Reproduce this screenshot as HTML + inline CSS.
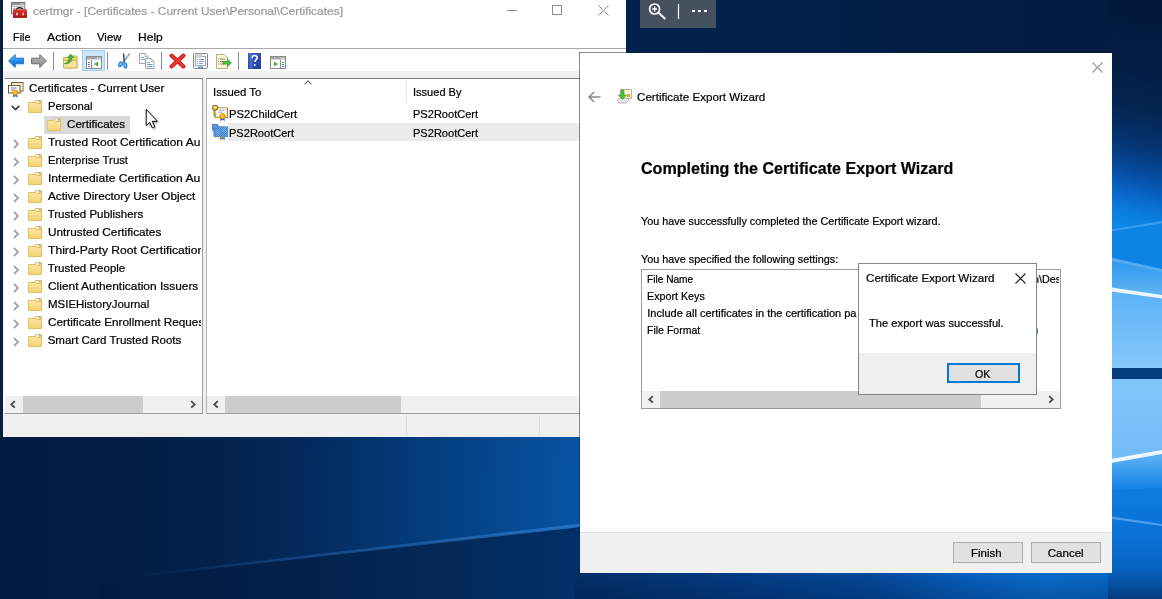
<!DOCTYPE html>
<html><head><meta charset="utf-8"><title>certmgr</title>
<style>
*{box-sizing:border-box;margin:0;padding:0}
html,body{width:1162px;height:599px;overflow:hidden;background:#03204a;font-family:"Liberation Sans",sans-serif;font-size:12px;color:#000}
div,svg,span{position:absolute}
.t{height:20px;line-height:20px;white-space:pre;transform-origin:0 50%;display:block;-webkit-text-stroke:.22px currentColor}
#root{left:0;top:0;width:1162px;height:599px;overflow:hidden;filter:blur(.4px)}
#desk{left:0;top:0;width:1162px;height:599px}
#mmc{left:0;top:0;width:626px;height:437px;background:#fff;overflow:hidden}
#tree{left:4px;top:78px;width:199px;height:336px;background:#fff;border:1px solid #9d9d9d;border-top-color:#7a7a7a;border-left-color:#fff;overflow:hidden}
#list{left:206px;top:78px;width:430px;height:336px;background:#fff;border:1px solid #9d9d9d;border-top-color:#7a7a7a;border-left-color:#b4b4b4;overflow:hidden}
#wiz{left:579px;top:52px;width:533px;height:521px;overflow:hidden}
#msg{left:858px;top:263px;width:179px;height:132px;background:#fff;border:1px solid #858585;overflow:hidden}
.btn{height:21px;border:1px solid #adadad;background:#e1e1e1}
.sb{background:#f0f0f0}
.thumb{background:#cdcdcd}
</style></head><body>
<div id="root">
<svg width="0" height="0" style="position:absolute">
<defs>
<linearGradient id="gfold" x1="0" y1="0" x2="0" y2="1"><stop offset="0" stop-color="#fae7a4"/><stop offset="1" stop-color="#f3d272"/></linearGradient>
<symbol id="folder" viewBox="0 0 14 13">
 <path d="M7.5 0.5h5.5a0.5 0.5 0 0 1 .5 .5v3h-6z" fill="#f5dc8a" stroke="#e0bf62" stroke-width="1"/>
 <rect x="8.300" y="1" width="2.700" height="1.600" fill="#fffbe6"/><rect x="10.600" y="0.800" width="2.200" height="1.600" fill="#8fbcd4"/>
 <path d="M0.5 2.5h7l1 1h5v9h-13z" fill="url(#gfold)" stroke="#e3c062" stroke-width="1"/>
</symbol>
<symbol id="chevR" viewBox="0 0 6 10"><path d="M1 0.900L5 5L1 9.100" fill="none" stroke="#a3a3a3" stroke-width="1.900"/></symbol>
<symbol id="chevD" viewBox="0 0 9 6"><path d="M0.800 0.800L4.500 4.600L8.200 0.800" fill="none" stroke="#3c3c3c" stroke-width="1.700"/></symbol>
<symbol id="sbL" viewBox="0 0 6 9"><path d="M4.800 1.100L1.300 4.400L4.800 7.700" fill="none" stroke="#484848" stroke-width="1.800"/></symbol>
<symbol id="sbR" viewBox="0 0 6 9"><path d="M1.200 1.100L4.700 4.400L1.200 7.700" fill="none" stroke="#484848" stroke-width="1.800"/></symbol>
<symbol id="cert" viewBox="0 0 16 16">
 <rect x="3.100" y="2.900" width="12.400" height="9.800" fill="#fffdf8" stroke="#b08a55" stroke-width="1"/>
 <rect x="4.200" y="4" width="10.200" height="7.600" fill="none" stroke="#f0e2c0" stroke-width=".9"/>
 <path d="M6.500 5.300h6M6.500 7.200h3.500" stroke="#8fa6d8" stroke-width=".9"/>
 <path d="M8.600 12.800l-.5 3.200 2.400-1.300 2.400 1.300-.5-3.200z" fill="#2c5fc4"/>
 <circle cx="10.500" cy="11.100" r="2.700" fill="#f4b21e" stroke="#d08c10" stroke-width=".8"/>
 <circle cx="10" cy="10.500" r="1" fill="#f9cf5a"/>
 <path d="M2.300 4.500v7M2.300 9.300h1.400M2.300 11.200h1.400" stroke="#b8902a" stroke-width="1.500" fill="none"/>
 <ellipse cx="3.100" cy="2.700" rx="2.900" ry="2.400" fill="#efcb4c" stroke="#6e5410" stroke-width=".9"/>
 <ellipse cx="3.300" cy="2.200" rx="1.100" ry=".8" fill="#fff4b8"/>
</symbol>
<pattern id="dith" width="2" height="2" patternUnits="userSpaceOnUse"><rect width="2" height="2" fill="#4a94e6" fill-opacity=".72"/><rect width="1" height="1" fill="#2f80e0" fill-opacity=".8"/><rect x="1" y="1" width="1" height="1" fill="#2f80e0" fill-opacity=".8"/></pattern>
</defs></svg>
<svg id="desk" viewBox="0 0 1162 599" preserveAspectRatio="none">
<defs>
 <linearGradient id="dtop" x1="626" y1="0" x2="1162" y2="0" gradientUnits="userSpaceOnUse"><stop offset="0" stop-color="#02224d"/><stop offset="1" stop-color="#021a3d"/></linearGradient>
 <linearGradient id="dbl" x1="0" y1="0" x2="580" y2="0" gradientUnits="userSpaceOnUse"><stop offset="0" stop-color="#021b3e"/><stop offset=".3" stop-color="#021f47"/><stop offset=".55" stop-color="#032a5c"/><stop offset=".8" stop-color="#043a78"/><stop offset="1" stop-color="#054a94"/></linearGradient>
 <radialGradient id="dglow" cx="640" cy="500" r="360" gradientUnits="userSpaceOnUse"><stop offset="0" stop-color="#0a6ed0" stop-opacity=".34"/><stop offset=".35" stop-color="#0a68c8" stop-opacity=".24"/><stop offset="1" stop-color="#0a60c0" stop-opacity="0"/></radialGradient>
 <linearGradient id="dbl2" x1="0" y1="0" x2="580" y2="0" gradientUnits="userSpaceOnUse"><stop offset="0" stop-color="#021a3c"/><stop offset=".4" stop-color="#021e46"/><stop offset=".8" stop-color="#032a5a"/><stop offset="1" stop-color="#03306a"/></linearGradient>
 <linearGradient id="dray" x1="130" y1="0" x2="580" y2="0" gradientUnits="userSpaceOnUse"><stop offset="0" stop-color="#2a6cb8" stop-opacity="0"/><stop offset=".4" stop-color="#2a6cb8" stop-opacity=".45"/><stop offset="1" stop-color="#2a7cd0" stop-opacity=".8"/></linearGradient>
 <linearGradient id="dbot" x1="580" y1="0" x2="1162" y2="0" gradientUnits="userSpaceOnUse"><stop offset="0" stop-color="#03306a"/><stop offset=".25" stop-color="#043c84"/><stop offset=".5" stop-color="#04489c"/><stop offset=".66" stop-color="#0660c0"/><stop offset=".8" stop-color="#0a6ed2"/><stop offset=".92" stop-color="#0868c8"/><stop offset="1" stop-color="#054c9c"/></linearGradient>
 <linearGradient id="dbotv" x1="0" y1="573" x2="0" y2="599" gradientUnits="userSpaceOnUse"><stop offset="0" stop-color="#000" stop-opacity="0"/><stop offset="1" stop-color="#001030" stop-opacity=".25"/></linearGradient>
 <linearGradient id="dr1" x1="1150" y1="0" x2="1096" y2="236" gradientUnits="userSpaceOnUse">
  <stop offset="0" stop-color="#021838"/><stop offset=".28" stop-color="#031d44"/><stop offset=".45" stop-color="#032652"/><stop offset=".58" stop-color="#04326e"/><stop offset=".7" stop-color="#064a9c"/><stop offset=".78" stop-color="#0860c0"/><stop offset=".87" stop-color="#0b7cde"/><stop offset=".94" stop-color="#0c88e8"/><stop offset="1" stop-color="#0c86e6"/></linearGradient>
 <linearGradient id="dr2" x1="0" y1="290" x2="0" y2="370" gradientUnits="userSpaceOnUse"><stop offset="0" stop-color="#5ab2f6"/><stop offset="1" stop-color="#86c8fa"/></linearGradient>
 <linearGradient id="dr3" x1="0" y1="378" x2="0" y2="460" gradientUnits="userSpaceOnUse"><stop offset="0" stop-color="#82c6fa"/><stop offset="1" stop-color="#72bcf7"/></linearGradient>
 <linearGradient id="dr4" x1="0" y1="480" x2="0" y2="599" gradientUnits="userSpaceOnUse"><stop offset="0" stop-color="#0c7ee2"/><stop offset=".5" stop-color="#0a70d4"/><stop offset=".75" stop-color="#0862c0"/><stop offset=".9" stop-color="#054c9c"/><stop offset="1" stop-color="#033a7c"/></linearGradient>
 <linearGradient id="dr5" x1="0" y1="258" x2="0" y2="292" gradientUnits="userSpaceOnUse"><stop offset="0" stop-color="#2a96ec"/><stop offset="1" stop-color="#5cb2f4"/></linearGradient>
 <linearGradient id="dr6" x1="0" y1="458" x2="0" y2="492" gradientUnits="userSpaceOnUse"><stop offset="0" stop-color="#56aef4"/><stop offset="1" stop-color="#0c7ee2"/></linearGradient>
 <clipPath id="cr"><rect x="1108" y="0" width="54" height="599"/></clipPath>
</defs>
<rect width="1162" height="599" fill="#021d45"/>
<rect x="600" y="0" width="562" height="60" fill="url(#dtop)"/>
<rect x="0" y="430" width="590" height="169" fill="url(#dbl)"/>
<rect x="0" y="430" width="590" height="169" fill="url(#dglow)"/>
<path d="M100 580L590 524.500V599H100z" fill="url(#dbl2)"/>
<path d="M130 576L590 522.500V526L130 578z" fill="url(#dray)"/>
<rect x="575" y="565" width="587" height="34" fill="url(#dbot)"/>
<rect x="575" y="565" width="587" height="34" fill="url(#dbotv)"/>
<g clip-path="url(#cr)">
 <rect x="1108" y="0" width="54" height="240" fill="url(#dr1)"/>
 <path d="M1108 230L1162 221V223.500L1108 232z" fill="#3a9cee"/>
 <path d="M1108 232L1162 223.500V280H1108z" fill="#0c84e6"/>
 <path d="M1108 257L1162 271V300H1108z" fill="url(#dr5)"/>
 <path d="M1108 257L1162 269V272L1108 260z" fill="#56acf0"/>
 <path d="M1108 287L1162 295V372H1108z" fill="url(#dr2)"/>
 <path d="M1108 287L1162 295V298.500L1108 291z" fill="#eaf5fe"/>
 <rect x="1108" y="368" width="54" height="11" fill="#053c7c"/>
 <rect x="1108" y="379" width="54" height="110" fill="url(#dr3)"/>
 <path d="M1108 463L1162 452V494H1108z" fill="url(#dr6)"/>
 <path d="M1108 459.500L1162 450V454L1108 463.500z" fill="#f0f8ff"/>
 <path d="M1108 490L1162 488V599H1108z" fill="url(#dr4)"/>
 <path d="M1108 516L1162 524V526L1108 518.500z" fill="#4aa2ee"/>
</g>
</svg>
<div id="mmc"><svg style="left:11px;top:2px" width="17" height="17" viewBox="0 0 17 17">
<rect x="0.500" y="0.500" width="13.300" height="11.200" fill="#fff" stroke="#6f7378"/>
<rect x="1" y="1" width="12.300" height="1.900" fill="#8f9399"/>
<rect x="9.400" y="1.400" width="1" height="1" fill="#fff"/><rect x="11.300" y="1.400" width="1" height="1" fill="#fff"/>
<path d="M1 4.200h12.300" stroke="#8f9399" stroke-width=".9"/>
<path d="M1.500 6.300h11.500M3.300 6.300v5" stroke="#a9adb3" stroke-width=".8"/>
<path d="M5.600 7.800c.3-2.900 5.800-2.900 6.100 0" fill="none" stroke="#1a1a1a" stroke-width="1.300"/>
<rect x="2" y="7.500" width="14" height="8.300" rx=".8" fill="#cf2424"/>
<rect x="2" y="7.500" width="14" height="1" rx=".5" fill="#e25252"/>
<rect x="2" y="13.600" width="14" height="2.200" rx=".6" fill="#a81818"/>
<rect x="5.200" y="10.700" width="1.500" height="2.700" fill="#f3dede"/><rect x="11.400" y="10.700" width="1.500" height="2.700" fill="#f3dede"/>
</svg><span class="t" style="left:32.70px;top:1.3000000000000007px;font-size:11.5px;font-weight:normal;color:#999999;transform:scaleX(1.0387);">certmgr - [Certificates - Current User\Personal\Certificates]</span><div style="left:507px;top:10px;width:10px;height:1px;background:#8c8c8c"></div><div style="left:552px;top:5px;width:10px;height:10px;border:1px solid #8c8c8c"></div><svg style="left:598px;top:5px" width="11" height="11" viewBox="0 0 11 11"><path d="M0.500 0.500L10.500 10.500M10.500 0.500L0.500 10.500" stroke="#8c8c8c" stroke-width="1"/></svg><span class="t" style="left:12.60px;top:26.700000000000003px;font-size:11.5px;font-weight:normal;color:#000;transform:scaleX(0.9497);">File</span><span class="t" style="left:46.60px;top:26.700000000000003px;font-size:11.5px;font-weight:normal;color:#000;transform:scaleX(1.0667);">Action</span><span class="t" style="left:97.40px;top:26.700000000000003px;font-size:11.5px;font-weight:normal;color:#000;transform:scaleX(0.9871);">View</span><span class="t" style="left:137.90px;top:26.700000000000003px;font-size:11.5px;font-weight:normal;color:#000;transform:scaleX(1.0483);">Help</span><div style="left:0;top:48px;width:626px;height:1px;background:#a8a8a8"></div><svg style="left:8px;top:54px" width="16" height="14" viewBox="0 0 16 14">
<defs><linearGradient id="gb" x1="0" y1="0" x2="0" y2="1"><stop offset="0" stop-color="#6fc0f6"/><stop offset=".5" stop-color="#1f8fe6"/><stop offset="1" stop-color="#1566c4"/></linearGradient></defs>
<path d="M0.600 7L7.200 0.600V4.200H15.400V9.800H7.200V13.400z" fill="url(#gb)" stroke="#1b6fc8" stroke-width="1"/></svg><svg style="left:31px;top:54px" width="16" height="14" viewBox="0 0 16 14">
<defs><linearGradient id="gg" x1="0" y1="0" x2="0" y2="1"><stop offset="0" stop-color="#b8b8b8"/><stop offset="1" stop-color="#8c8c8c"/></linearGradient></defs>
<path d="M15.400 7L8.800 0.600V4.200H0.600V9.800H8.800V13.400z" fill="url(#gg)" stroke="#6e6e6e" stroke-width="1"/></svg><div style="left:53px;top:52px;width:1px;height:18px;background:#8d8d8d"></div><div style="left:107px;top:52px;width:1px;height:18px;background:#8d8d8d"></div><div style="left:161px;top:52px;width:1px;height:18px;background:#8d8d8d"></div><div style="left:238px;top:52px;width:1px;height:18px;background:#8d8d8d"></div><svg style="left:63px;top:53px" width="15" height="16" viewBox="0 0 15 16">
<path d="M0.500 4.500h5l1-1.500h7.500v12h-13.500z" fill="#f1d27a" stroke="#d2b25a"/>
<path d="M0.500 7.500h13.500v7.500h-13.500z" fill="#f7e3a0" stroke="#d2b25a"/>
<path d="M4 11.500c3.500-.5 5.500-3 5.500-6.500h-2l3.500-4 3.500 4h-2c0 4.500-3.500 8-8.500 6.500z" fill="#3fb536" stroke="#2b8f26" stroke-width=".6" transform="translate(-2.500,0) scale(.92)"/>
</svg><div style="left:82px;top:50px;width:23px;height:21px;background:#cce4f7;border:1px solid #a5cdee"></div><svg style="left:86px;top:56px" width="16" height="13" viewBox="0 0 16 13">
<rect x="0.500" y="0.500" width="15" height="12" fill="#fff" stroke="#8a8a8a"/>
<rect x="1" y="1" width="14" height="2.500" fill="#a8a8a8"/>
<rect x="11" y="1.500" width="1.200" height="1.200" fill="#fff"/><rect x="13" y="1.500" width="1.200" height="1.200" fill="#fff"/>
<path d="M5.500 4v8.500" stroke="#8a8a8a"/>
<path d="M2 6.500h2M2 8.500h2M2 10.500h2" stroke="#5a7fc0" stroke-width="1"/>
<path d="M12 5.500v5L8 8z" fill="#3fb536"/>
</svg><svg style="left:118px;top:53px" width="13" height="16" viewBox="0 0 13 16">
<path d="M11.600 0.800L4.200 10.800" stroke="#8e9cae" stroke-width="1.600" fill="none"/>
<path d="M5.600 0.500L6.300 9.500" stroke="#4f6078" stroke-width="1.700" fill="none"/>
<ellipse cx="2.500" cy="11.300" rx="1.600" ry="2.300" fill="#8ccaf6" stroke="#2a86de" stroke-width="1.400" transform="rotate(30 2.500 11.300)"/>
<ellipse cx="7.300" cy="12.500" rx="1.400" ry="2.600" fill="#8ccaf6" stroke="#2a86de" stroke-width="1.400" transform="rotate(-8 7.300 12.500)"/>
</svg><svg style="left:139px;top:53px" width="16" height="16" viewBox="0 0 16 16">
<path d="M0.500 0.500h5.500l3 3v7h-8.500z" fill="#fff" stroke="#a3a7ad"/>
<path d="M6 0.500v3h3" fill="none" stroke="#a3a7ad" stroke-width=".8"/>
<path d="M2 4.500h3M2 6.500h5" stroke="#7fa8e6" stroke-width="1"/>
<path d="M6.500 5.500h5.500l3 3v7h-8.500z" fill="#fff" stroke="#a3a7ad"/>
<path d="M12 5.500v3h3" fill="none" stroke="#a3a7ad" stroke-width=".8"/>
<path d="M8 9.500h3M8 11.500h5.500M8 13.500h5.500" stroke="#6f9be0" stroke-width="1"/>
</svg><svg style="left:169px;top:53px" width="17" height="16" viewBox="0 0 17 16">
<path d="M2.500 2.500L14.500 13.500M14.500 2.500L2.500 13.500" stroke="#d41414" stroke-width="4" stroke-linecap="round"/>
<path d="M2.500 2.500L14.500 13.500M14.500 2.500L2.500 13.500" stroke="#e93a3a" stroke-width="2" stroke-linecap="round"/>
</svg><svg style="left:193px;top:53px" width="15" height="16" viewBox="0 0 15 16">
<rect x="0.500" y="0.500" width="14" height="15" rx="1" fill="#f4f4f4" stroke="#8a8a8a"/>
<rect x="2.500" y="3.500" width="10" height="9" fill="#fff" stroke="#a8a8a8"/>
<rect x="2.500" y="2" width="6" height="2" fill="#e0e0e0" stroke="#a8a8a8" stroke-width=".6"/>
<path d="M4 6.500h1M6 6.500h5M4 8.500h1M6 8.500h5M4 10.500h1M6 10.500h4" stroke="#7aa0d8" stroke-width="1"/>
<rect x="5" y="13.500" width="5" height="1.500" fill="#4aa0e0"/>
</svg><svg style="left:215px;top:54px" width="17" height="15" viewBox="0 0 17 15">
<path d="M1.500 0.500h8l3 3v11h-11z" fill="#fdf7d8" stroke="#b8b08a"/>
<path d="M3 5h1M5 5h5M3 7.500h1M5 7.500h4M3 10h1M5 10h4" stroke="#8a8a7a" stroke-width="1"/>
<path d="M8 7.500h4.500v-2.300l4 3.600-4 3.600v-2.300h-4.500z" fill="#4cc23c" stroke="#2e9a28" stroke-width=".7"/>
</svg><svg style="left:248px;top:53px" width="13" height="16" viewBox="0 0 13 16">
<defs><linearGradient id="gh" x1="0" y1="0" x2="1" y2="1"><stop offset="0" stop-color="#3a66cc"/><stop offset="1" stop-color="#23399a"/></linearGradient></defs>
<rect width="13" height="16" fill="url(#gh)"/>
<path d="M4 5.200c0-2 1.200-2.800 2.600-2.800s2.600 .9 2.600 2.400c0 1.800-2.300 2-2.300 4.200" fill="none" stroke="#fff" stroke-width="1.500"/>
<rect x="5.900" y="11.200" width="1.700" height="1.700" fill="#fff"/>
<rect x="2" y="0" width="2.200" height="16" fill="#6f8fe0" opacity=".45"/>
</svg><svg style="left:270px;top:56px" width="16" height="13" viewBox="0 0 16 13">
<rect x="0.500" y="0.500" width="15" height="12" fill="#fff" stroke="#8a8a8a"/>
<rect x="1" y="1" width="14" height="2.500" fill="#a8a8a8"/>
<rect x="11" y="1.500" width="1.200" height="1.200" fill="#fff"/><rect x="13" y="1.500" width="1.200" height="1.200" fill="#fff"/>
<path d="M10.500 4v8.500" stroke="#8a8a8a"/>
<path d="M12 6.500h2M12 8.500h2M12 10.500h2" stroke="#5a7fc0" stroke-width="1"/>
<path d="M4 5.500v5L8 8z" fill="#3fb536"/>
</svg><div style="left:0;top:71px;width:626px;height:366px;background:#f0f0f0"></div><div id="tree"><svg style="left:3px;top:2.799999999999997px" width="16" height="16" viewBox="0 0 16 16">
 <rect x="3.500" y="0.500" width="11.500" height="8.500" fill="#fdf3d8" stroke="#6b5a3a"/>
 <rect x="4.500" y="1.500" width="9.500" height="6.500" fill="none" stroke="#f3e4b8" stroke-width=".8"/>
 <rect x="0.500" y="3.500" width="11.500" height="7.500" fill="#fffaf0" stroke="#6b5a3a"/>
 <path d="M3 6h5.500M3 8h2.500" stroke="#5f7fd0" stroke-width="1"/>
 <path d="M12.500 9.500l.3 2.500 1.200-.8z" fill="#c9962a"/>
 <path d="M5.600 11.500l-.6 4 2.300-1.300 2.300 1.300-.6-4z" fill="#2c5fc4"/>
 <circle cx="7.300" cy="10.600" r="2.600" fill="#f0ae1c" stroke="#c98a12" stroke-width=".8"/>
 <circle cx="6.900" cy="10.100" r=".9" fill="#f8d060"/>
</svg><span class="t" style="left:23.90px;top:-0.7000000000000028px;font-size:11.5px;font-weight:normal;color:#000;transform:scaleX(1.0145);">Certificates - Current User</span><svg style="left:6.199999999999999px;top:25.75999999999999px" width="9" height="6"><use href="#chevD"/></svg><svg style="left:23.2px;top:21.05999999999999px" width="14" height="13"><use href="#folder"/></svg><span class="t" style="left:42.70px;top:17.25px;font-size:11.5px;font-weight:normal;color:#000;transform:scaleX(0.9804);">Personal</span><div style="left:39px;top:37.12px;width:86px;height:17.5px;background:#d9d9d9"></div><svg style="left:42.2px;top:39.019999999999996px" width="14" height="13"><use href="#folder"/></svg><span class="t" style="left:61.90px;top:35.19999999999999px;font-size:11.5px;font-weight:normal;color:#000;transform:scaleX(1.0099);">Certificates</span><svg style="left:7.800000000000001px;top:59.980000000000004px" width="6" height="10"><use href="#chevR"/></svg><svg style="left:23.2px;top:56.980000000000004px" width="14" height="13"><use href="#folder"/></svg><span class="t" style="left:42.70px;top:53.14999999999998px;font-size:11.5px;font-weight:normal;color:#000;transform:scaleX(1.0389);">Trusted Root Certification Au</span><svg style="left:7.800000000000001px;top:77.93999999999998px" width="6" height="10"><use href="#chevR"/></svg><svg style="left:23.2px;top:74.93999999999998px" width="14" height="13"><use href="#folder"/></svg><span class="t" style="left:42.70px;top:71.1px;font-size:11.5px;font-weight:normal;color:#000;transform:scaleX(0.9856);">Enterprise Trust</span><svg style="left:7.800000000000001px;top:95.90000000000002px" width="6" height="10"><use href="#chevR"/></svg><svg style="left:23.2px;top:92.90000000000002px" width="14" height="13"><use href="#folder"/></svg><span class="t" style="left:42.70px;top:89.05000000000001px;font-size:11.5px;font-weight:normal;color:#000;transform:scaleX(1.0542);">Intermediate Certification Au</span><svg style="left:7.800000000000001px;top:113.86px" width="6" height="10"><use href="#chevR"/></svg><svg style="left:23.2px;top:110.86px" width="14" height="13"><use href="#folder"/></svg><span class="t" style="left:42.70px;top:107.0px;font-size:11.5px;font-weight:normal;color:#000;transform:scaleX(1.0191);">Active Directory User Object</span><svg style="left:7.800000000000001px;top:131.82px" width="6" height="10"><use href="#chevR"/></svg><svg style="left:23.2px;top:128.82px" width="14" height="13"><use href="#folder"/></svg><span class="t" style="left:42.70px;top:124.94999999999999px;font-size:11.5px;font-weight:normal;color:#000;">Trusted Publishers</span><svg style="left:7.800000000000001px;top:149.78000000000003px" width="6" height="10"><use href="#chevR"/></svg><svg style="left:23.2px;top:146.78000000000003px" width="14" height="13"><use href="#folder"/></svg><span class="t" style="left:42.70px;top:142.89999999999998px;font-size:11.5px;font-weight:normal;color:#000;transform:scaleX(1.0246);">Untrusted Certificates</span><svg style="left:7.800000000000001px;top:167.74px" width="6" height="10"><use href="#chevR"/></svg><svg style="left:23.2px;top:164.74px" width="14" height="13"><use href="#folder"/></svg><span class="t" style="left:42.70px;top:160.84999999999997px;font-size:11.5px;font-weight:normal;color:#000;transform:scaleX(1.0541);">Third-Party Root Certification</span><svg style="left:7.800000000000001px;top:185.70000000000005px" width="6" height="10"><use href="#chevR"/></svg><svg style="left:23.2px;top:182.70000000000005px" width="14" height="13"><use href="#folder"/></svg><span class="t" style="left:42.70px;top:178.8px;font-size:11.5px;font-weight:normal;color:#000;">Trusted People</span><svg style="left:7.800000000000001px;top:203.66000000000003px" width="6" height="10"><use href="#chevR"/></svg><svg style="left:23.2px;top:200.66000000000003px" width="14" height="13"><use href="#folder"/></svg><span class="t" style="left:42.70px;top:196.75px;font-size:11.5px;font-weight:normal;color:#000;transform:scaleX(1.0358);">Client Authentication Issuers</span><svg style="left:7.800000000000001px;top:221.62px" width="6" height="10"><use href="#chevR"/></svg><svg style="left:23.2px;top:218.62px" width="14" height="13"><use href="#folder"/></svg><span class="t" style="left:42.70px;top:214.7px;font-size:11.5px;font-weight:normal;color:#000;transform:scaleX(0.9968);">MSIEHistoryJournal</span><svg style="left:7.800000000000001px;top:239.58000000000004px" width="6" height="10"><use href="#chevR"/></svg><svg style="left:23.2px;top:236.58000000000004px" width="14" height="13"><use href="#folder"/></svg><span class="t" style="left:42.70px;top:232.64999999999998px;font-size:11.5px;font-weight:normal;color:#000;transform:scaleX(1.0231);">Certificate Enrollment Reques</span><svg style="left:7.800000000000001px;top:257.54px" width="6" height="10"><use href="#chevR"/></svg><svg style="left:23.2px;top:254.54000000000002px" width="14" height="13"><use href="#folder"/></svg><span class="t" style="left:42.70px;top:250.59999999999997px;font-size:11.5px;font-weight:normal;color:#000;">Smart Card Trusted Roots</span><div style="left:195.8px;top:0;width:2px;height:317px;background:#fff"></div><div class="sb" style="left:0;top:317px;width:197px;height:17px"></div><div class="thumb" style="left:17.5px;top:317px;width:120.5px;height:17px"></div><svg style="left:4.6px;top:321px" width="6" height="9"><use href="#sbL"/></svg><svg style="left:184.6px;top:321px" width="6" height="9"><use href="#sbR"/></svg></div><div id="list"><span class="t" style="left:5.80px;top:2.799999999999997px;font-size:11.5px;font-weight:normal;color:#000;transform:scaleX(0.9834);">Issued To</span><span class="t" style="left:205.60px;top:2.799999999999997px;font-size:11.5px;font-weight:normal;color:#000;transform:scaleX(0.9604);">Issued By</span><div style="left:199px;top:1px;width:1px;height:23px;background:#e5e5e5"></div><svg style="left:97.19999999999999px;top:1px" width="8" height="5" viewBox="0 0 8 5"><path d="M0.600 4.400L4 0.900L7.400 4.400" fill="none" stroke="#707070" stroke-width="1.200"/></svg><div style="left:20.5px;top:44.3px;width:420px;height:18px;background:#ebebeb"></div><svg style="left:4.699999999999989px;top:25.700000000000003px" width="16" height="16"><use href="#cert"/></svg><svg style="left:4.699999999999989px;top:44.7px" width="16" height="16"><use href="#cert"/></svg><svg style="left:4.699999999999989px;top:44.7px" width="16" height="16" viewBox="0 0 16 16"><path d="M0 0h6.500v2.500h9.500v10.500h-14.500v-6h-1.500z" fill="url(#dith)"/></svg><span class="t" style="left:22.20px;top:25px;font-size:11.5px;font-weight:normal;color:#000;transform:scaleX(0.9789);">PS2ChildCert</span><span class="t" style="left:22.20px;top:44.400000000000006px;font-size:11.5px;font-weight:normal;color:#000;transform:scaleX(0.9607);">PS2RootCert</span><span class="t" style="left:205.60px;top:25px;font-size:11.5px;font-weight:normal;color:#000;transform:scaleX(0.9607);">PS2RootCert</span><span class="t" style="left:205.60px;top:44.400000000000006px;font-size:11.5px;font-weight:normal;color:#000;transform:scaleX(0.9607);">PS2RootCert</span><div class="sb" style="left:0;top:317px;width:430px;height:17px"></div><div class="thumb" style="left:18px;top:317px;width:176px;height:17px"></div><svg style="left:5.5px;top:321px" width="6" height="9"><use href="#sbL"/></svg></div><div style="left:406px;top:416px;width:1px;height:19px;background:#dcdcdc"></div><div style="left:539px;top:416px;width:1px;height:19px;background:#dcdcdc"></div><div style="left:0;top:0;width:3px;height:437px;background:#06203f"></div><svg style="left:143px;top:106px" width="20" height="26" viewBox="0 0 20 26">
<defs><filter id="cb" x="-30%" y="-30%" width="160%" height="160%"><feGaussianBlur stdDeviation="0.9"/></filter></defs>
<path d="M3.600 3.800V20.200L7 17L9.600 22.600L12 21.500L9.500 16H14.600z" fill="#000" opacity=".35" filter="url(#cb)" transform="translate(1.200,1.300)"/>
<path d="M3.200 3.300V19.600L6.700 16.300L9.300 21.900L11.800 20.800L9.300 15.300H14.500z" fill="#fff" stroke="#000" stroke-width="1" stroke-linejoin="miter"/></svg></div>
<div style="left:640px;top:0;width:76px;height:27.500px;background:#45515f"></div>
<svg style="left:640px;top:0" width="76" height="28" viewBox="0 0 76 28">
<circle cx="14.600" cy="9" r="5" fill="none" stroke="#fff" stroke-width="1.700"/>
<path d="M18.300 12.600L25.300 19" stroke="#fff" stroke-width="2"/>
<path d="M12.200 9h4.800M14.600 6.600v4.800" stroke="#fff" stroke-width="1.500"/>
<path d="M38.500 4v15" stroke="#fff" stroke-width="1.200"/>
<rect x="52" y="10" width="3" height="2" fill="#fff"/><rect x="58" y="10" width="3" height="2" fill="#fff"/><rect x="64" y="10" width="3" height="2" fill="#fff"/>
</svg>
<div id="wiz"><div style="left:1px;top:1px;width:532px;height:520px;background:#fff"></div><div style="left:0;top:0;width:1px;height:521px;background:rgba(20,30,50,.5)"></div><div style="left:0;top:0;width:533px;height:1px;background:rgba(20,30,50,.5)"></div><svg style="left:9px;top:39px" width="13" height="12" viewBox="0 0 13 12"><path d="M12.500 6H1.500M6 1L1 6L6 11" fill="none" stroke="#8a8a8a" stroke-width="1.500"/></svg><svg style="left:37px;top:36px" width="17" height="17" viewBox="0 0 17 17">
<rect x="4.500" y="1.500" width="11" height="9" fill="#fdf8e4" stroke="#c8b88a"/>
<rect x="11" y="6" width="3" height="3" fill="#e8a020"/>
<path d="M1 12l3-2h7l2 2-3 3h-7z" fill="#e8e8e8" stroke="#9a9a9a" stroke-width=".7"/>
<path d="M5 2v5h-2.500l4 4.500 4-4.500h-2.500v-5z" fill="#4cc23c" stroke="#2e9a28" stroke-width=".6"/>
</svg><span class="t" style="left:57.60px;top:35px;font-size:11.5px;font-weight:normal;color:#000;transform:scaleX(1.0087);">Certificate Export Wizard</span><svg style="left:513px;top:10px" width="11" height="11" viewBox="0 0 11 11"><path d="M0.500 0.500L10.500 10.500M10.500 0.500L0.500 10.500" stroke="#9a9a9a" stroke-width="1.100"/></svg><span class="t" style="left:61.70px;top:106.5px;font-size:16px;font-weight:bold;color:#000;transform:scaleX(1.0042);">Completing the Certificate Export Wizard</span><span class="t" style="left:61.50px;top:159px;font-size:11px;font-weight:normal;color:#000;transform:scaleX(0.9810);">You have successfully completed the Certificate Export wizard.</span><span class="t" style="left:61.50px;top:197px;font-size:11px;font-weight:normal;color:#000;transform:scaleX(0.9852);">You have specified the following settings:</span><div style="left:62px;top:217px;width:420px;height:140px;border:1px solid #9c9c9c;background:#fff"></div><span class="t" style="left:68.30px;top:217px;font-size:11px;font-weight:normal;color:#000;transform:scaleX(0.9217);">File Name</span><span class="t" style="left:68.30px;top:234px;font-size:11px;font-weight:normal;color:#000;transform:scaleX(0.9745);">Export Keys</span><span class="t" style="left:68.30px;top:251px;font-size:11px;font-weight:normal;color:#000;">Include all certificates in the certification pa</span><span class="t" style="left:68.30px;top:268px;font-size:11px;font-weight:normal;color:#000;transform:scaleX(0.9582);">File Format</span><div style="left:457px;top:218px;width:22.500px;height:20px;overflow:hidden"><span class="t" style="left:-3.30px;top:-1px;font-size:11px;font-weight:normal;color:#000;transform:scaleX(0.9800);">n\Desktop</span></div><span class="t" style="left:455.70px;top:268px;font-size:11px;font-weight:normal;color:#1a3f9a;">)</span><div class="sb" style="left:63px;top:339px;width:418px;height:17px"></div><div class="thumb" style="left:81px;top:339px;width:320.500px;height:17px"></div><svg style="left:68.5px;top:343px" width="6" height="9"><use href="#sbL"/></svg><svg style="left:468.5px;top:343px" width="6" height="9"><use href="#sbR"/></svg><div style="left:1px;top:480px;width:532px;height:42px;background:#f0f0f0;border-top:1px solid #dfdfdf"></div><div class="btn" style="left:374px;top:490px;width:70px;"></div><div class="btn" style="left:452px;top:490px;width:70px;"></div><span class="t" style="left:391.70px;top:490.5px;font-size:11.5px;font-weight:normal;color:#000;transform:scaleX(0.9939);">Finish</span><span class="t" style="left:468.80px;top:490.5px;font-size:11.5px;font-weight:normal;color:#000;">Cancel</span></div>
<div id="msg"><span class="t" style="left:7.20px;top:4.199999999999989px;font-size:11.5px;font-weight:normal;color:#000;transform:scaleX(1.0103);">Certificate Export Wizard</span><svg style="left:156px;top:8.5px" width="11" height="11" viewBox="0 0 11 11"><path d="M0.500 0.500L10.500 10.500M10.500 0.500L0.500 10.500" stroke="#222" stroke-width="1.100"/></svg><span class="t" style="left:10.00px;top:49px;font-size:11.5px;font-weight:normal;color:#000;transform:scaleX(0.9711);">The export was successful.</span><div style="left:0;top:89px;width:177px;height:42px;background:#f0f0f0"></div><div style="left:87.5px;top:98.5px;width:73px;height:20.500px;background:#e1e1e1;border:2px solid #0078d7"></div><span class="t" style="left:115.60px;top:100px;font-size:11.5px;font-weight:normal;color:#000;transform:scaleX(0.9323);">OK</span></div>
</div></body></html>
